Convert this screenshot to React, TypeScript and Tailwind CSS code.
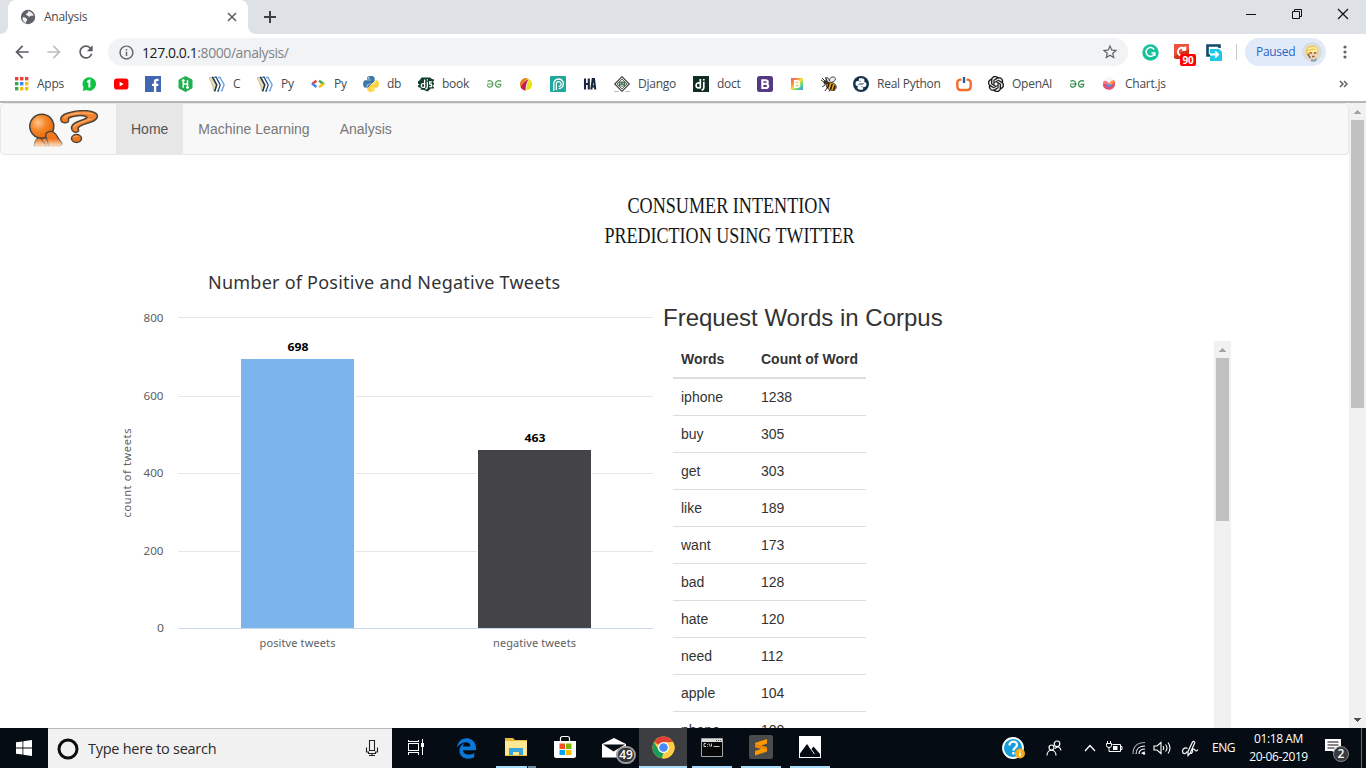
import React from "react";
import { FaPython } from "react-icons/fa";
import { FaEdgeLegacy } from "react-icons/fa6";
import { SiOpenai } from "react-icons/si";
import { MdArrowBack, MdArrowForward, MdRefresh, MdInfoOutline, MdStarBorder, MdPublic } from "react-icons/md";

type Kids = { children?: React.ReactNode };

const Svg16 = ({ children }: Kids) => (
  <svg width="16" height="16" viewBox="0 0 16 16" className="block shrink-0">
    {children}
  </svg>
);

const AppsIcon = () => (
  <Svg16>
    {["#ea4335", "#ea4335", "#ea4335", "#34a853", "#4285f4", "#fbbc05", "#34a853", "#fbbc05", "#fbbc05"].map((c, i) => (
      <rect key={i} x={2 + (i % 3) * 5} y={1 + Math.floor(i / 3) * 5} width="3.4" height="3.4" fill={c} />
    ))}
  </Svg16>
);
const OneIcon = () => (
  <Svg16>
    <path d="M8.200 1.200a6.800 6.800 0 1 1-3 12.900L1.600 15l1-3.400A6.800 6.800 0 0 1 8.200 1.200z" fill="#0ec244" />
    <path d="M6.200 6 8.400 4.800v6.700" stroke="#fff" strokeWidth="2" fill="none" />
  </Svg16>
);
const YoutubeIcon = () => (
  <Svg16>
    <rect x="1" y="2.600" width="14.400" height="11" rx="2.800" fill="#f00" />
    <path d="M6.600 5.800v4.600l4-2.300z" fill="#fff" />
  </Svg16>
);
const FacebookIcon = () => (
  <Svg16>
    <rect width="16" height="16" fill="#4267b2" />
    <path d="M8.900 16v-5.900H7V7.700h1.900V6c0-2 1.200-3.200 3-3.200.8 0 1.600.1 1.700.2v2h-1.200c-1 0-1.100.5-1.100 1.200v1.500h2.200l-.3 2.400h-1.900V16z" fill="#fff" />
  </Svg16>
);
const HackerRankIcon = () => (
  <Svg16>
    <path d="M8.500.5 15 4v8l-6.500 3.500L2 12V4z" fill="#1fb14f" stroke="#1fb14f" strokeLinejoin="round" />
    <path d="M6.300 3.800v8M10.500 4.200v8M6.300 8h4.200M5 5l1.300-1.300L7.600 5M9.200 11l1.300 1.300L11.800 11" stroke="#fff" strokeWidth="1.500" fill="none" />
  </Svg16>
);
const BooksIcon = () => (
  <Svg16>
    <path d="M.2 1.800 3.600.8 8 9.200 5.800 15.500 4.300 14.800C5 10.500 1.500 6 .2 1.800z" fill="#e6dcae" stroke="#a9a07c" strokeWidth=".5" />
    <path d="m3.400.9 4.300 8-2 6.300" fill="none" stroke="#1c2f4a" strokeWidth="1.500" />
    <path d="M5.300 1.400 7 .9l4.200 8-2 6.200-1-.5" fill="none" stroke="#24508c" strokeWidth="1.300" />
    <path d="m9 1.600 1.900-.4 4.200 7.700-2.300 5.900-1-.4" fill="none" stroke="#6e9fd6" strokeWidth="1.400" />
  </Svg16>
);
const CodeIcon = () => (
  <Svg16>
    <path d="M6.500 4.800 2 8" stroke="#ea4335" strokeWidth="2.400" />
    <path d="m2 7.500 4.500 3.500" stroke="#4285f4" strokeWidth="2.400" />
    <path d="m9 4.800 5 3.400" stroke="#34a853" strokeWidth="2.400" />
    <path d="m14 7.600-5 3.500" stroke="#fbbc05" strokeWidth="2.400" />
  </Svg16>
);
const PythonIcon = () => (
  <span className="block h-4 w-4">
    <svg width="0" height="0" className="absolute">
      <defs>
        <linearGradient id="py" x1="0" y1="0" x2="1" y2="1">
          <stop offset=".5" stopColor="#3b77a8" />
          <stop offset=".5" stopColor="#fdd23f" />
        </linearGradient>
      </defs>
    </svg>
    <FaPython size={18} fill="url(#py)" className="-ml-px -mt-px" />
  </span>
);
const DjangoBookIcon = () => (
  <Svg16>
    <path d="M3.500 1.500H12L14 3l2 .5V5l-1.500.5L16 7v1.500L14.500 9.500l1.500 2v1h-3L9.500 15.500 6 14l-3.500-.5L3 12 0 11V9.500l1.500-1L0 7.500V5.500l1.500-1z" fill="#123c2d" />
    <path d="M6.600 3.500v7.800c-2.800.5-3.300-.4-3.300-1.900 0-1.600 1.200-2.200 3.300-1.600M9.300 5.800V11c0 1.200-.5 1.700-1.800 2M9.300 3.300v1.300M14 5.800h-2.300v2.400h1.800v2.500h-2.300" stroke="#fff" strokeWidth="1.300" fill="none" />
  </Svg16>
);
const GeeksIcon = ({ color }: { color: string }) => (
  <Svg16>
    <path d="M1.600 5.500C3 4 6.700 4.300 6.700 8s-4.900 4.300-5.300 1M1 8h6.700M14.900 5.500C13.500 4 9.500 4.300 9.500 8s5.300 4.600 5.300.4h-3.300" fill="none" stroke={color} strokeWidth="1.200" />
  </Svg16>
);
const BallIcon = () => (
  <Svg16>
    <circle cx="8" cy="8.400" r="6.100" fill="#e9e31b" />
    <path d="M9.500 2.200A6.300 6.300 0 0 0 2.600 11C4 8.500 6.500 4.500 9.500 2.200z" fill="#e8772c" />
    <path d="M11 2.900C7 4.500 4 8 2.700 11.200c.9 1.800 2.800 3.100 5.100 3.300 0-4 1-8 3.200-11.600z" fill="#c2185b" />
    <path d="M11.200 3C9 6 8 10 7.900 14.500" stroke="#fff" strokeWidth=".7" fill="none" />
  </Svg16>
);
const PIcon = () => (
  <Svg16>
    <rect width="16" height="16" rx="1" fill="#21a79b" />
    <path d="M3.800 14.800V8a4.800 4.800 0 1 1 4.900 4.600M6.300 14V8.200a2.400 2.400 0 1 1 2.400 2.300" fill="none" stroke="#fff" strokeWidth="1.300" />
  </Svg16>
);
const HAIcon = () => (
  <Svg16>
    <path d="M3 2.500v11M6.800 2.500v11M3 8h4" stroke="#16263d" strokeWidth="2.100" fill="none" />
    <path d="M9.300 13.500 10.700 3h1.300l1.300 10.500M10 10.500h3" stroke="#16263d" strokeWidth="2" fill="none" />
  </Svg16>
);
const DjangoDiamondIcon = () => (
  <Svg16>
    <path d="M8 .7 15.300 8 8 15.300.7 8z" fill="#f5f5f2" stroke="#333" strokeWidth="1.100" />
    <path d="M8 3 13 8l-5 5-5-5z" fill="none" stroke="#555" strokeWidth=".9" />
    <rect x="4.700" y="5.500" width="6.600" height="5" rx="2" fill="#476d52" />
    <path d="M6 7.300h1.200M8.800 7.300H10M6.500 9.300h3" stroke="#fff" strokeWidth=".8" />
    <path d="M0 15.500h5M11 15.500h5" stroke="#bbb" />
  </Svg16>
);
const DjIcon = () => (
  <Svg16>
    <rect width="16" height="16" fill="#102e25" />
    <path d="M7.300 3v8.600c-3.700.8-4.200-.5-4.200-2.300 0-1.900 1.600-2.900 4.200-2.100M10.800 5.800v5.700c0 1.600-.6 2.200-2.200 2.600M10.800 3v1.600" fill="none" stroke="#fff" strokeWidth="1.700" />
  </Svg16>
);
const BootstrapIcon = ({ small }: { small?: boolean }) => (
  <Svg16>
    <defs>
      <linearGradient id="rainbow" x1="0" y1="0" x2="1" y2="1">
        <stop offset="0" stopColor="#f0559b" />
        <stop offset=".3" stopColor="#f6913a" />
        <stop offset=".5" stopColor="#f4e33c" />
        <stop offset=".75" stopColor="#4fd08a" />
        <stop offset="1" stopColor="#4b8ff0" />
      </linearGradient>
    </defs>
    {small ? <rect x="2" y="2" width="12" height="12" fill="url(#rainbow)" /> : <rect width="16" height="16" rx="2.500" fill="#553a83" />}
    <path d="M5.300 4.200h3.200c3 0 3 3.600.2 3.700 3.400 0 3.200 4.100 0 4.100H5.300zM5.300 7.900h3.200" transform={small ? "translate(1.600 1.600) scale(.8)" : undefined} fill="none" stroke="#fff" strokeWidth="2.100" />
  </Svg16>
);
const BeeIcon = () => (
  <Svg16>
    <path d="M6.500 6C3 0 7 0 8.500 5 8 0 15 0 14.500 3 14 6 10 6.500 9 7z" fill="#e3eef5" stroke="#333" strokeWidth=".9" />
    <ellipse cx="10.300" cy="10.300" rx="5.200" ry="3.900" transform="rotate(25 10.300 10.300)" fill="#efa51e" stroke="#222" strokeWidth=".7" />
    <path d="m8.200 7-1.700 5M11.300 7.800 9.500 13.500M14 9.500l-1.500 5" stroke="#1c1712" strokeWidth="1.500" />
    <circle cx="4.800" cy="6.500" r="2.300" fill="#3b3021" />
    <path d="m4 5-3-3M5.500 4.500 4.500 1.500M4 9l-3 2M6 12l-2 3M9 14l-1 1.500M0 4l3 2" stroke="#222" strokeWidth=".9" />
  </Svg16>
);
const RealPythonIcon = () => (
  <Svg16>
    <circle cx="8" cy="8" r="8" fill="#17324d" />
    <g transform="rotate(8 8 8)">
      <path d="M5.300 2.800c1-.7 4.400-.7 5.200 0 .6.500.6 3.400 0 4C9.700 7.600 6 7 5.400 8.600L5 10.500c-3 .5-3.300-4.700-.8-4.900h3.700V5H5.200z" fill="#fff" />
      <path d="M10.700 13.200c-1 .7-4.400.7-5.200 0-.6-.5-.6-3.400 0-4 .8-.8 4.500-.2 5.100-1.800l.4-1.900c3-.5 3.300 4.700.8 4.900H8.100v.6h2.700z" fill="#fff" />
    </g>
  </Svg16>
);
const PowerIcon = () => (
  <Svg16>
    <path d="M5.500 3.600H4.700C2.300 3.600 1.300 5 1.300 7v3c0 2.500 1 4 3.400 4h6.600c2.400 0 3.400-1.500 3.400-4V7c0-2-1-3.400-3.400-3.400h-.8" fill="none" stroke="#f36c2b" strokeWidth="2.400" />
    <path d="M8 1v6" stroke="#1d5d9e" strokeWidth="2.300" />
  </Svg16>
);
const ChartJsIcon = () => (
  <Svg16>
    <path d="m8 .5 6.500 3.700v7.600L8 15.500l-6.500-3.700V4.200z" fill="#f5f6f7" />
    <path d="M2 6.500c1.500-3 4-1.500 6 1 2-3 4.500-4 6-2.500v3.500c0 3-3 5-6 5s-6-2-6-5z" fill="#f77685" />
    <path d="M2 9c2-2.500 4-.5 6 .5 2.500-2 4-3 6-2-.5 4-3 6-6 6S2.500 12 2 9z" fill="#e64f72" />
    <path d="M8 8.500c1-2 2.500-3.700 4-4v2.500L9 10z" fill="#f8a63b" />
    <path d="M5.500 8 8 9.300l2-1.200v1.800L8 11.500l-2.500-1.600z" fill="#36a2eb" />
  </Svg16>
);

const bookmarks: { icon: React.ReactNode; label?: string; slot: string }[] = [
  { icon: <AppsIcon />, label: "Apps", slot: "w-[68px]" },
  { icon: <OneIcon />, slot: "w-8" },
  { icon: <YoutubeIcon />, slot: "w-8" },
  { icon: <FacebookIcon />, slot: "w-8" },
  { icon: <HackerRankIcon />, slot: "w-8" },
  { icon: <BooksIcon />, label: "C", slot: "w-12" },
  { icon: <BooksIcon />, label: "Py", slot: "w-[53px]" },
  { icon: <CodeIcon />, label: "Py", slot: "w-[53px]" },
  { icon: <PythonIcon />, label: "db", slot: "w-[55px]" },
  { icon: <DjangoBookIcon />, label: "book", slot: "w-[68px]" },
  { icon: <GeeksIcon color="#5aa05c" />, slot: "w-8" },
  { icon: <BallIcon />, slot: "w-8" },
  { icon: <PIcon />, slot: "w-8" },
  { icon: <HAIcon />, slot: "w-8" },
  { icon: <DjangoDiamondIcon />, label: "Django", slot: "w-[79px]" },
  { icon: <DjIcon />, label: "doct", slot: "w-16" },
  { icon: <BootstrapIcon />, slot: "w-8" },
  { icon: <BootstrapIcon small />, slot: "w-8" },
  { icon: <BeeIcon />, slot: "w-8" },
  { icon: <RealPythonIcon />, label: "Real Python", slot: "w-[103px]" },
  { icon: <PowerIcon />, slot: "w-8" },
  { icon: <SiOpenai size={16} color="#111" stroke="#111" strokeWidth={0.5} />, label: "OpenAI", slot: "w-[81px]" },
  { icon: <GeeksIcon color="#2f8d46" />, slot: "w-8" },
  { icon: <ChartJsIcon />, label: "Chart.js", slot: "w-20" },
];

function TabStrip() {
  return (
    <div className="flex h-[34px] shrink-0 bg-[#dee1e6]">
      <div className="w-2 bg-white"><div className="h-full rounded-br-lg bg-[#dee1e6]" /></div>
      <div className="flex w-60 items-center rounded-t-lg bg-white pl-3 pr-[10px]">
        <svg width="16" height="16" viewBox="0 0 16 16">
          <circle cx="8" cy="8" r="7.200" fill="#5f6368" />
          <path d="M2.500 8.500c1.500-.5 3 .3 4.200 1.200 1 .8.300 2-.6 2.700V14C3.700 13.200 2.300 11.200 2.500 8.500zM6 5.500C6 4.300 7.500 4.500 8 3.500V2.200c2.500 0 4.800 1.600 5.500 4.300-1 .8-2.200-.3-3 .5-.8 1-2 1-2.500 0-.6-.9-2-.3-2-1.500z" fill="#fff" opacity=".92" />
        </svg>
        <span className="ml-2 flex-1 text-[12px] tracking-[-0.25px] text-[#45494d]">Analysis</span>
        <svg width="12" height="12" viewBox="0 0 12 12"><path d="m2 2 8 8M10 2l-8 8" stroke="#5f6368" strokeWidth="1.600" /></svg>
      </div>
      <div className="w-2 bg-white"><div className="h-full rounded-bl-lg bg-[#dee1e6]" /></div>
      <svg width="14" height="14" viewBox="0 0 14 14" className="ml-[7px] mt-[10px]"><path d="M7 1v12M1 7h12" stroke="#3c4043" strokeWidth="2" /></svg>
      <div className="ml-auto flex items-start gap-[34px] pr-[17px] pt-2">
        <svg width="12" height="12" viewBox="0 0 12 12"><path d="M1 6.500h10" stroke="#111" /></svg>
        <svg width="12" height="12" viewBox="0 0 12 12"><path d="M1.500 3.500h7v7h-7zM3.500 3.500v-2h7v7h-2" fill="none" stroke="#111" /></svg>
        <svg width="12" height="12" viewBox="0 0 12 12"><path d="m1 1 10 10M11 1 1 11" stroke="#111" strokeWidth="1.200" /></svg>
      </div>
    </div>
  );
}

function Toolbar() {
  return (
    <div className="flex h-9 shrink-0 items-center bg-white">
      <MdArrowBack size={20} color="#5a5e62" className="ml-3" />
      <MdArrowForward size={20} color="#bdbfc1" className="ml-3" />
      <MdRefresh size={20} color="#5a5e62" className="ml-3" />
      <div className="ml-3 flex h-7 w-[1020px] items-center rounded-full bg-[#f1f3f4] pl-[10px] pr-[9px]">
        <MdInfoOutline size={17} color="#5f6368" />
        <span className="ml-[7px] flex-1 text-[14px] tracking-[-0.42px] text-[#808489]"><span className="text-[#202124]">127.0.0.1</span>:8000/analysis/</span>
        <MdStarBorder size={18} color="#5f6368" />
      </div>
      <svg width="17" height="17" viewBox="0 0 17 17" className="ml-[14px]">
        <circle cx="8.500" cy="8.500" r="8.200" fill="#15c39a" />
        <path d="M12.200 5.500a4.400 4.400 0 1 0 .6 3.500H9.500M12.800 9v3" fill="none" stroke="#fff" strokeWidth="1.500" />
      </svg>
      <div className="relative ml-[15px] h-4 w-4">
        <svg width="16" height="16" viewBox="0 0 16 16">
          <rect width="15" height="15" rx="2" fill="#d5301c" /><path d="M0 0h15v5L0 12z" fill="#ec5140" />
          <path d="M11 5.300a4 4 0 1 0 0 5M11.300 2.500v3.300H8" fill="none" stroke="#fff" strokeWidth="1.900" />
        </svg>
        <span className="absolute left-[6px] top-[10px] flex h-3 w-4 items-center justify-center rounded-xs bg-[#f00] text-[10px] font-bold tracking-[-0.3px] text-white">90</span>
      </div>
      <svg width="16" height="17" viewBox="0 0 16 17" className="ml-4">
        <path d="M13.500 4V1.500h-12v10H4" fill="none" stroke="#134868" strokeWidth="2.600" />
        <path d="M4 5h9l3 3v9H4z" fill="#1bc8e8" /><path d="M4 10.500h8M9.200 7.500l3 3-3 3" fill="none" stroke="#fff" strokeWidth="1.800" />
      </svg>
      <div className="ml-[14px] h-4 w-px bg-[#c6c8cb]" />
      <div className="ml-2 flex h-7 w-[81px] items-center rounded-full bg-[#e1eaf8] pl-[11px]">
        <span className="text-[12px] tracking-[-0.3px] text-[#2a66c8]">Paused</span>
        <svg width="20" height="20" viewBox="0 0 20 20" className="ml-auto mr-1">
          <circle cx="10" cy="10" r="10" fill="#dcdcda" />
          <path d="M4 11C3 6 7 3.500 11 3.700c4 .3 6 3.300 5 8.300l-2 4.500-4-2z" fill="#f1c44d" />
          <path d="M7 9l7.500-.5.500 5.500-3 3.500-3-2z" fill="#f6d5b1" />
          <path d="M5 9.700 15.500 8.500M6 7l5-1.500L15 7" stroke="#fff19d" strokeWidth="1.500" fill="none" />
          <path d="M7.500 11h2.400M11.800 11h2.400M10 14.500h2.500M5.500 12l3 4" stroke="#8c583a" strokeWidth="1.300" fill="none" />
          <path d="m9 17 3 .5 3-1.500-1 3.500H9z" fill="#8aa3a5" />
        </svg>
      </div>
      <svg width="4" height="14" viewBox="0 0 4 14" className="ml-[17px]"><g fill="#5f6368"><circle cx="2" cy="2" r="1.600" /><circle cx="2" cy="7" r="1.600" /><circle cx="2" cy="12" r="1.600" /></g></svg>
    </div>
  );
}

function BookmarkBar() {
  return (
    <div className="flex h-[33px] shrink-0 items-center border-b-2 border-[#b4b7b4] bg-white pb-[3px] pl-[13px]">
      {bookmarks.map((b, i) => (
        <div key={i} className={"flex shrink-0 items-center gap-2 whitespace-nowrap text-[12px] tracking-[-0.25px] text-[#45494d] " + b.slot}>
          {b.icon}
          {b.label}
        </div>
      ))}
      <svg width="9" height="8" viewBox="0 0 9 8" className="ml-auto mr-[18px]"><path d="m1 1 3 3-3 3M5 1l3 3-3 3" fill="none" stroke="#5f6368" strokeWidth="1.500" /></svg>
    </div>
  );
}

function SiteLogo() {
  return (
    <svg width="70" height="37" viewBox="0 0 70 37" className="block">
      <defs>
        <radialGradient id="head" cx=".35" cy=".35" r=".7"><stop offset="0" stopColor="#ffc690" /><stop offset=".45" stopColor="#f58a2c" /><stop offset="1" stopColor="#e4640c" /></radialGradient>
        <linearGradient id="fade" gradientUnits="userSpaceOnUse" x1="0" y1="20" x2="0" y2="36"><stop offset=".55" stopColor="#f1771f" /><stop offset="1" stopColor="#fbe3cd" /></linearGradient>
        <linearGradient id="edge" gradientUnits="userSpaceOnUse" x1="0" y1="20" x2="0" y2="36"><stop offset=".5" stopColor="#4b4036" /><stop offset="1" stopColor="#e9cdb4" /></linearGradient>
      </defs>
      <path d="M5 36c.5-5 3-9 8-9l7 1v8z" fill="url(#fade)" stroke="url(#edge)" strokeWidth="1.200" />
      <circle cx="12.800" cy="16.300" r="12" fill="url(#head)" stroke="#46423c" strokeWidth="1.500" />
      <path d="M17 27c-1.500-4 3-7 7.500-5 3.500 2.500 5 8 8 10.500 1.500 1.500 0 3-2 3.500H20z" fill="url(#fade)" stroke="url(#edge)" strokeWidth="1.200" />
      <path d="M12 29l5 6" stroke="url(#edge)" strokeWidth="1.200" />
      <path d="M32.500 11.500c-2-3.500.5-7 6.500-8.500 9-2.500 19-3 25-1 6 2 5.500 6.500.5 9-4.500 2.300-12.500 3.500-15 6.500-1.500 2 1.500 2.500-.5 4.200-3.500 1.800-6.500-.7-6.500-3.700 0-4.500 6-6.300 12-8.500 4-1.500 4.500-2.500 1-3.500-5-1-12.500.2-15.500 2-1.600 1 .5 2.700-1 3.800-1.800 1.200-5 1.200-6.500-.3z" fill="#f5822a" stroke="#4b443b" strokeWidth="1.500" strokeLinejoin="round" />
      <path d="M35.500 8c3-5 18-6 28.500-4M44.500 17.500c1.500-4.500 9.500-5.500 17-8.500" fill="none" stroke="#ffb377" strokeWidth="1.100" />
      <ellipse cx="47.500" cy="28.500" rx="5" ry="3.900" fill="#ee761c" stroke="#4b443b" strokeWidth="1.500" />
      <path d="M44.500 27.500c1-1.500 3-1.700 4.500-1.200" stroke="#ffc08a" fill="none" />
    </svg>
  );
}

function Arrow({ down }: { down?: boolean }) {
  return (
    <svg width="7" height="4" viewBox="0 0 7 4" className="block" shapeRendering="crispEdges">
      {down ? <path d="M0 0h7L3.500 4z" fill="#505050" /> : <path d="M3.500 0 7 4H0z" fill="#a3a3a3" />}
    </svg>
  );
}

function TweetChart() {
  const ticks: [number, number, number][] = [[800, 317.5, 322], [600, 396.5, 400], [400, 473.5, 477], [200, 551.5, 555], [0, 628.5, 632]];
  return (
    <svg width="540" height="400" viewBox="115 260 540 400" fontFamily="'Noto Sans', 'Open Sans', sans-serif" fontSize="11" fill="#606060" className="block shrink-0">
      <text x="208" y="289" fontSize="18" fill="#333" textLength="352">Number of Positive and Negative Tweets</text>
      {ticks.map(([v, y, ty]) => (
        <g key={v}>
          <path d={`M178 ${y}h475`} stroke={v ? "#e6e6e6" : "#ccd6eb"} />
          <text x={v ? 143.5 : 157} y={ty} textLength={v ? 20 : 7} lengthAdjust="spacingAndGlyphs">{v}</text>
        </g>
      ))}
      <path d="M240 358h115v270H240zM477 449h115v179H477z" fill="#fff" />
      <rect x="241" y="359" width="113" height="269" fill="#7cb5ec" />
      <rect x="478" y="450" width="113" height="178" fill="#434348" />
      <g fill="#000" fontWeight="700">
        <text x="287.5" y="351" textLength="21" lengthAdjust="spacingAndGlyphs">698</text>
        <text x="524.5" y="442" textLength="21" lengthAdjust="spacingAndGlyphs">463</text>
      </g>
      <text x="259.5" y="647" textLength="76">positve tweets</text>
      <text x="493" y="647" textLength="83">negative tweets</text>
      <text transform="translate(131 517.5) rotate(-90)" textLength="89">count of tweets</text>
    </svg>
  );
}

const words: [string, number][] = [["iphone", 1238], ["buy", 305], ["get", 303], ["like", 189], ["want", 173], ["bad", 128], ["hate", 120], ["need", 112], ["apple", 104], ["phone", 100]];

function WordTable() {
  return (
    <div className="w-[193px]">
      <div className="flex h-[38px] items-start border-b-2 border-[#ddd] pt-2 font-bold">
        <div className="w-20 pl-2">Words</div>
        <div className="whitespace-nowrap pl-2">Count of Word</div>
      </div>
      {words.map(([w, n]) => (
        <div key={w} className="flex h-[37px] items-start border-b border-[#ddd] pt-2">
          <div className="w-20 pl-2">{w}</div>
          <div className="pl-2">{n}</div>
        </div>
      ))}
    </div>
  );
}

function Page() {
  return (
    <div className="flex min-h-0 flex-1 bg-white font-['Liberation_Sans',Arial,sans-serif] text-[14px] leading-5 text-[#333]">
      <div className="flex min-w-0 flex-1 flex-col overflow-hidden">
        <nav className="flex h-[52px] shrink-0 rounded border border-[#e7e7e7] bg-[#f8f8f8] text-[#777]">
          <div className="w-[115px] pl-7 pt-[6px]"><SiteLogo /></div>
          <a className="bg-[#e7e7e7] px-[15px] py-[15px] text-[#555]">Home</a>
          <a className="px-[15px] py-[15px]">Machine Learning</a>
          <a className="px-[15px] py-[15px]">Analysis</a>
        </nav>
        <svg width="290" height="80" viewBox="590 180 290 80" className="ml-[590px] mt-[25px] block shrink-0 overflow-visible" fontFamily="'Liberation Serif', serif" fontSize="24" fill="#161616">
          <text x="627.5" y="213" textLength="203" lengthAdjust="spacingAndGlyphs">CONSUMER INTENTION</text>
          <text x="604.5" y="243" textLength="250" lengthAdjust="spacingAndGlyphs">PREDICTION USING TWITTER</text>
        </svg>
        <div className="flex min-h-0 flex-1 pl-[115px]">
          <TweetChart />
          <div className="flex w-[576px] flex-col pl-2 pt-[45px]">
            <h3 className="h-[36px] text-[24px] leading-[26px]">Frequest Words in Corpus</h3>
            <div className="flex min-h-0 flex-1 justify-between overflow-hidden pl-[10px]">
              <WordTable />
              <div className="flex w-[17px] flex-col items-center bg-[#f1f1f1]">
                <div className="flex h-[17px] shrink-0 items-center"><Arrow /></div>
                <div className="h-[163px] w-[13px] shrink-0 bg-[#c1c1c1]" />
              </div>
            </div>
          </div>
        </div>
      </div>
      <div className="flex w-[17px] flex-col items-center bg-[#f1f1f1]">
        <div className="flex h-[17px] items-center"><Arrow /></div>
        <div className="h-[288px] w-[13px] bg-[#c1c1c1]" />
        <div className="mt-auto flex h-[17px] items-center"><Arrow down /></div>
      </div>
    </div>
  );
}

function TaskSlot({ children, active, open, w = "w-[49px]" }: Kids & { active?: boolean; open?: boolean; w?: string }) {
  return (
    <div className={"flex shrink-0 flex-col items-center " + w + (active ? " bg-[#3c3e42]" : "")}>
      <div className="flex flex-1 items-center justify-center">{children}</div>
      {active ? <div className="h-[2px] w-full bg-[#a9dafa]" /> : <div className={"h-[2px] w-10 " + (open ? "bg-[#a9dafa]" : "")} />}
    </div>
  );
}

function Taskbar() {
  return (
    <div className="flex h-10 shrink-0 bg-[#060c13] text-white">
      <div className="flex w-12 items-center justify-center">
        <svg width="16" height="16" viewBox="0 0 16 16"><path d="m0 2.300 6.500-.9v6.200H0zM7.300 1.300 16 0v7.600H7.300zM0 8.400h6.500v6.200L0 13.700zM7.300 8.400H16V16l-8.700-1.300z" fill="#fff" /></svg>
      </div>
      <div className="flex w-[344px] items-center border-t border-[#b9b9b9] bg-[#f1f1f1] pl-[9px] pr-[12px]">
        <svg width="22" height="22" viewBox="0 0 22 22"><circle cx="11" cy="11" r="9" fill="none" stroke="#0c0c0c" strokeWidth="3" /></svg>
        <span className="ml-[9px] flex-1 text-[14.500px] tracking-[-0.27px] text-[#2b2b2b]">Type here to search</span>
        <svg width="16" height="18" viewBox="0 0 16 18" className="-mt-px"><path d="M5.500 1.500h5v10h-5zM2.500 8.500v4.500h2v1.500h7V13h2V8.500M8 14.500v2M5 16.500h6" fill="none" stroke="#222" strokeWidth="1.100" /></svg>
      </div>
      <TaskSlot w="w-[47px]">
        <svg width="18" height="16" viewBox="0 0 18 16" shapeRendering="crispEdges"><path d="M1.500 4.500h10v7h-10zM1.500 3V.5M11.500 3V.5M1.500 2.500h10M1.500 13v2.500M11.500 13v2.500M1.500 13.500h10M15.500 0v4M15.500 8v8" fill="none" stroke="#fff" /><path d="M14 4h3v4h-3z" fill="#fff" /></svg>
      </TaskSlot>
      <TaskSlot w="w-[55px]"><FaEdgeLegacy size={21} color="#0a78d7" className="mt-[2px]" /></TaskSlot>
      <div className="flex w-[44px] shrink-0 flex-col items-center">
        <div className="flex flex-1 items-center">
          <svg width="22" height="18" viewBox="0 0 22 18"><path d="M0 0h8l2 2h12v16H0z" fill="#e7b93d" /><path d="M0 3h22v14H0z" fill="#ffe793" /><path d="M4 17v-6q0-1 1-1h12q1 0 1 1v6h-4v-3H8v3z" fill="#37a6df" /></svg>
        </div>
        <div className="flex h-[2px] w-10"><div className="w-[31px] bg-[#a9dafa]" /><div className="ml-px flex-1 bg-[#6d8ea3]" /></div>
      </div>
      <TaskSlot w="w-[54px]">
        <svg width="24" height="24" viewBox="0 0 24 24"><path d="M7.500 7V3.500c0-1.500 1-2 2-2h5c1 0 2 .5 2 2V7" fill="none" stroke="#fff" strokeWidth="1.200" /><path d="M1 6h22v15q0 2-2 2H3q-2 0-2-2z" fill="#fff" /><path d="M6.500 8.500H12V14H6.500z" fill="#f25022" /><path d="M13 8.500h5.500V14H13z" fill="#7fba00" /><path d="M6.500 15H12v5H6.500z" fill="#00a4ef" /><path d="M13 15h5.500v5H13z" fill="#ffb900" /></svg>
      </TaskSlot>
      <div className="relative flex w-[47px] shrink-0 items-center pl-[10px]">
        <svg width="24" height="20" viewBox="0 0 24 20"><path d="M0 6 12 0l12 6v13.500H0z" fill="#fff" /><path d="m1 6.500 22 .1-11.500 7z" fill="#060c13" /></svg>
        <span className="absolute left-[24px] top-[18px] flex h-[18px] w-5 items-center justify-center rounded-full border-2 border-[#999] bg-[#303236] text-[12px] font-semibold leading-none">49</span>
      </div>
      <TaskSlot active w="w-12">
        <svg width="23" height="23" viewBox="0 0 48 48">
          <circle cx="24" cy="24" r="23" fill="#ffcd40" />
          <path d="M24 24 4.100 12.500A23 23 0 0 1 43.900 12.500H24z" fill="#e34133" />
          <path d="M4.100 12.500 14.800 31 24 34l-3.500 12.700A23 23 0 0 1 4.100 12.500z" fill="#159d59" />
          <path d="M24 13h20.200A23 23 0 0 1 22 47l11-18z" fill="#ffcd40" />
          <circle cx="24" cy="24" r="11.500" fill="#fff" /><circle cx="24" cy="24" r="9" fill="#4a8af4" />
        </svg>
      </TaskSlot>
      <TaskSlot open w="w-[49px]">
        <svg width="22" height="19" viewBox="0 0 22 19"><path d="M.5.5h21v18H.5z" fill="#070707" stroke="#a5a5a5" /><path d="M1 1h20v3H1z" fill="#ddd" /><path d="M15 2.500h1M17 2.500h1M19 2.500h1" stroke="#555" /><path d="M5 5.500H3v3h2M6.500 6v.8M6.500 8v.8M8 5.500l1.300 3.300M10.500 5.500v3M12.500 8.500h6" stroke="#ddd" fill="none" strokeWidth=".9" /></svg>
      </TaskSlot>
      <TaskSlot open w="w-[50px]">
        <svg width="24" height="24" viewBox="0 0 24 24"><rect width="24" height="24" rx="2" fill="#4b4b4b" /><path d="M18 4v4.500l-6 2 6 1.800v4.200L6 20.500V16l6-2-6-1.800V8z" fill="#ff9800" /><path d="m6 8.500 12 3.800v2L6 12z" fill="#e98600" /></svg>
      </TaskSlot>
      <TaskSlot open w="w-[48px]">
        <svg width="22" height="22" viewBox="0 0 22 22"><rect width="22" height="22" fill="#fff" /><path d="m1 17.500 7-9.500 4 5.500 2.500-3 6.500 7.500v3H1z" fill="#060c13" /><path d="m10.500 11 5 7" stroke="#fff" strokeWidth=".9" /></svg>
      </TaskSlot>
      <div className="ml-auto flex items-center">
        <svg width="24" height="22" viewBox="0 0 24 22"><circle cx="11" cy="11" r="10" fill="#159dd9" stroke="#fff" strokeWidth="1.800" /><path d="M7.500 8.500c0-5 7.500-5 7.500-.8 0 3-3.600 3-3.600 6M11.400 15v2.500" fill="none" stroke="#fff" strokeWidth="2.300" /><circle cx="18" cy="16.500" r="5" fill="#f4ac1d" /><path d="M18 13.500v1M18 15.500v4" stroke="#fff" strokeWidth="1.500" /></svg>
        <svg width="16" height="16" viewBox="0 0 16 16" className="ml-5"><g fill="none" stroke="#fff" strokeWidth="1.200"><circle cx="11" cy="3.800" r="2.800" /><circle cx="5.500" cy="7.500" r="2.500" /><path d="M1 15.500c0-7 9-7 9 0M9 8.500c3-3 5.500-1 6 2" /></g></svg>
        <svg width="12" height="8" viewBox="0 0 12 8" className="ml-[22px]"><path d="m1 7 5-5.500L11 7" fill="none" stroke="#fff" strokeWidth="1.300" /></svg>
        <svg width="17" height="14" viewBox="0 0 17 14" className="ml-[10px]"><path d="M6.500 3.500h8v7h-9M14.500 5.500h1.500v3h-1.500M.5 2.500h5v2q0 2-2.500 2t-2.500-2zM1.500 2.500V0M4.500 2.500V0M3 6.500v4h3" fill="none" stroke="#fff" /><path d="M7 5h4.500v4H7z" fill="#fff" /></svg>
        <svg width="14" height="14" viewBox="0 0 14 14" className="ml-[9px]"><g fill="none" stroke="#fff" strokeWidth="1.100"><path d="M1 13C1 5 6 1.500 13 1.500" opacity=".65" /><path d="M4 13c0-5 3.500-8 9-8M7 13c0-3.500 2.500-5 6-5M10 13c0-1.500 1-2 3-2" /></g><circle cx="12" cy="12.500" r="1.200" fill="#fff" /></svg>
        <svg width="18" height="14" viewBox="0 0 18 14" className="ml-[7px]"><path d="M1 5h3l4-3.500v11L4 9H1zM10 5q1.500 2 0 4M12.500 3.500q3 3.500 0 7M15 1.500q4 5.500 0 11" fill="none" stroke="#fff" strokeWidth="1.100" /></svg>
        <svg width="18" height="17" viewBox="0 0 18 17" className="ml-[10px]"><path d="M7 11.500 11.500 2c.7-1.300 2.700-.5 2.200 1L9 13.500l-2 2zM6.500 8.500C3.500 7 1.500 9 1.500 11.500s3.500 3 4.500 0M8.500 13c2 1.500 3.500-1 3-2.500s1.500-2 2.500-.5 2 1 3-.5" fill="none" stroke="#fff" strokeWidth="1.200" /></svg>
        <span className="ml-[13px] w-[25px] whitespace-nowrap text-[12px] tracking-[-0.5px]">ENG</span>
        <div className="ml-[9px] w-[65px] whitespace-nowrap text-center text-[12px] leading-[18px] tracking-[-0.4px]">01:18 AM<br />20-06-2019</div>
        <div className="relative ml-[14px] h-5 w-[28px]">
          <svg width="17" height="18" viewBox="0 0 17 18"><path d="M0 1h16v12h-5v3l-4-3H0z" fill="#fff" /><path d="M2.500 4h11M2.500 7h11M2.500 10h7" stroke="#111" /></svg>
          <span className="absolute left-[8px] top-[8px] flex h-4 w-4 items-center justify-center rounded-full border border-[#888] bg-[#383a3d] text-[12px] font-semibold leading-none">2</span>
        </div>
        <div className="ml-[8px] mr-1 h-10 w-px bg-[#666a6e]" />
      </div>
    </div>
  );
}

export default function App() {
  return (
    <div className="flex h-[768px] w-[1366px] flex-col overflow-hidden bg-white font-['Open_Sans','Noto_Sans',sans-serif]">
      <TabStrip />
      <Toolbar />
      <BookmarkBar />
      <Page />
      <Taskbar />
    </div>
  );
}
